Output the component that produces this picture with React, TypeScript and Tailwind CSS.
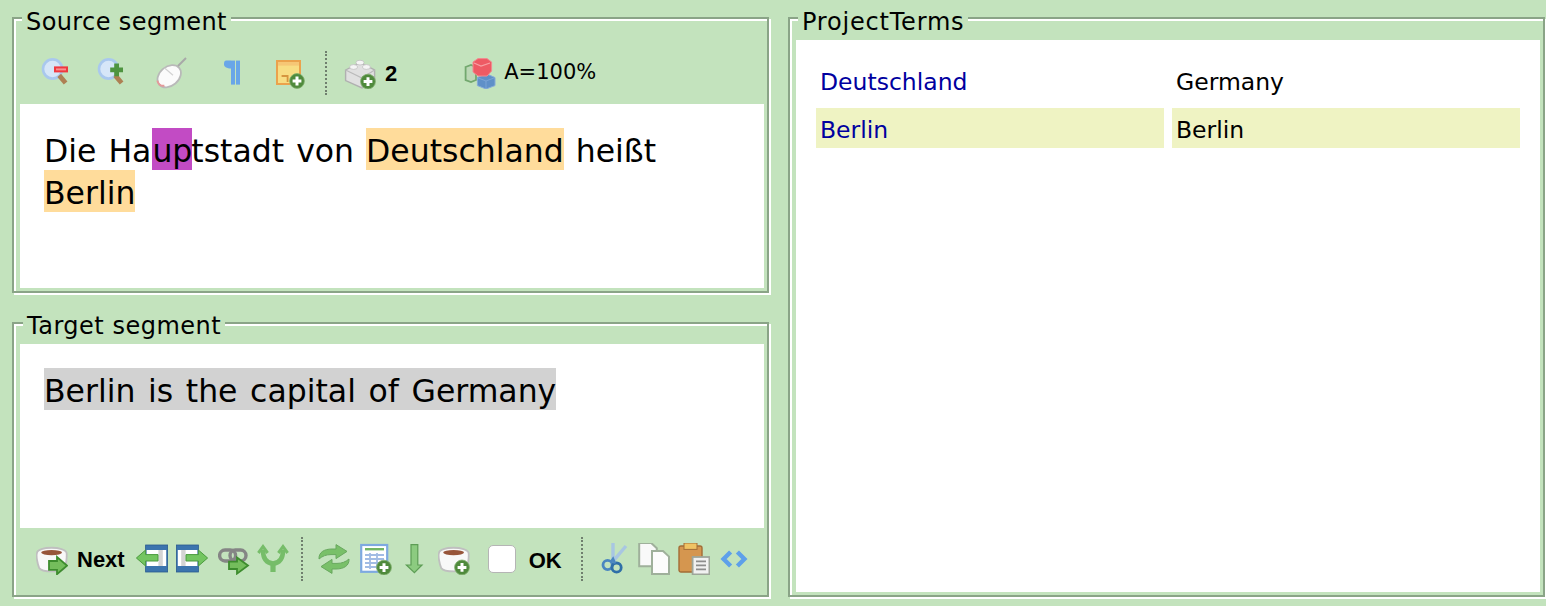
import React from "react";

const Plus = ({ x = 10, y = 10 }: { x?: number; y?: number }) => (
  <g>
    <circle cx={x} cy={y} r="3.7" fill="#4f8a3c" stroke="#7fae6c" strokeWidth=".4" />
    <path d={`M${x - 2.2} ${y}h4.4M${x} ${y - 2.2}v4.4`} stroke="#ffffff" strokeWidth="1.5" />
  </g>
);

const I = ({ children }: { children: React.ReactNode }) => (
  <svg width={32} height={32} viewBox="0 0 16 16" className="shrink-0">
    {children}
  </svg>
);

const Lens = ({ plus }: { plus?: boolean }) => (
  <I>
    <circle cx="6.3" cy="6" r="4.8" fill="#d6e6f8" stroke="#a9c8ee" strokeWidth="1.3" />
    <path d="M9.6 9.200l3.200 3.800" stroke="#ae8053" strokeWidth="2.400" />
    {plus ? (
      <path d="M10.300 3.200v6.400M7.100 6.400h6.400" stroke="#4e9440" strokeWidth="2.400" />
    ) : (
      <>
        <rect x="7" y="4.700" width="7" height="3" fill="#f0383f" />
        <rect x="8" y="5.700" width="5" height="1" fill="#f78f90" />
      </>
    )}
  </I>
);

const Mouse = () => (
  <I>
    <ellipse cx="6.600" cy="9.600" rx="6.500" ry="4.800" transform="rotate(-40 6.600 9.600)" fill="#fbfbfb" stroke="#b9b9b9" strokeWidth=".9" />
    <path d="M.7 11.800c.4 1.800 1.700 2.800 3.500 2.600" stroke="#e59a9a" strokeWidth="1" fill="none" />
    <path d="M4.300 5.500l4.200 3.600" stroke="#d2d2d2" strokeWidth=".6" />
    <path d="M11 4.500l4-4" stroke="#a8a8a8" strokeWidth="1" />
  </I>
);

const Pilcrow = () => (
  <I>
    <path d="M7.500 1.800H5.200C4.200 1.800 4 2.600 4 3.600c0 1.500 1.500 2 3.500 2.200z" fill="#69a6e8" />
    <rect x="7.500" y="1.800" width="2" height="12" fill="#69a6e8" />
    <rect x="10" y="1.800" width="2" height="12" fill="#69a6e8" />
  </I>
);

const Note = () => (
  <I>
    <rect x="1.500" y="2" width="11.500" height="11.500" fill="#f8dd83" stroke="#eba24c" />
    <rect x="2" y="2.500" width="10.500" height="1.800" fill="#f6c675" />
    <path d="M3.800 9.500h3v3" stroke="#d6963f" fill="none" strokeWidth=".9" />
    <Plus x={11.500} y={12} />
  </I>
);

const Brick = () => (
  <I>
    <path d="M.8 6.500L8 2.800l7.300 3.700v5.500L9 15.500.8 11.800z" fill="#e0e0e0" stroke="#b0b0b0" strokeWidth=".7" />
    <path d="M.8 6.500l8.200 4 6.300-4M9 10.500v5" stroke="#bababa" strokeWidth=".6" fill="none" />
    <ellipse cx="8" cy="2.800" rx="2" ry="1.200" fill="#f5f5f5" stroke="#c0c0c0" strokeWidth=".4" />
    <ellipse cx="4.800" cy="5" rx="2" ry="1.200" fill="#f5f5f5" stroke="#c0c0c0" strokeWidth=".4" />
    <ellipse cx="11.200" cy="5" rx="2" ry="1.200" fill="#f5f5f5" stroke="#c0c0c0" strokeWidth=".4" />
    <Plus x={12} y={12.300} />
  </I>
);

const Cubes = () => (
  <I>
    <path d="M.8 5l2.700-1L6 5v6.500l-2.500 1-2.700-1z" fill="#bcd8b6" stroke="#72a86e" strokeWidth=".9" />
    <path d="M6.700 10.300l4.300-2 4.500 2v4L11 16l-4.300-1.700z" fill="#5f90c8" stroke="#86abd8" strokeWidth=".5" />
    <path d="M6.700 10.300L11 12l4.500-1.700M11 12v4" stroke="#80a8d8" strokeWidth=".4" fill="none" />
    <path d="M4.500 2.500L7 .8h4.500l2.300 1.700v4.500L11.500 9.500H7L4.500 7.500z" fill="#ee5a64" stroke="#f18a90" strokeWidth=".5" />
    <path d="M5 3l3.500 1.500L13 3" stroke="#f7a0a4" strokeWidth=".6" fill="none" />
  </I>
);

const Cup = ({ add }: { add?: boolean }) => (
  <I>
    <path d="M.5 5c0-3.500 14.300-3.500 14.800 0 .2 1.800-.2 6-1 7.500-1.300 2.300-11.300 2.300-12.700 0C.9 11-.1 6.500.5 5z" fill="#f8f8f8" stroke="#bfbfbf" strokeWidth=".9" />
    <ellipse cx="7.800" cy="4.800" rx="5.200" ry="1.300" fill="#97553a" />
    {add ? (
      <Plus x={12} y={12.200} />
    ) : (
      <path d="M6.500 9H10.500V7l5 4.300-5 4.300v-2.200h-4z" fill="#74bd5c" stroke="#3d8c2e" strokeWidth=".9" />
    )}
  </I>
);

const BookArrow = ({ right }: { right?: boolean }) => (
  <I>
    <g transform={right ? "" : "matrix(-1 0 0 1 16 0)"}>
      <rect x=".2" y="1" width="11" height="13.500" fill="#3b74ae" stroke="#2a5b90" strokeWidth=".4" />
      <rect x=".9" y="3.500" width="9.800" height="8" fill="#ffffff" />
      <rect x="2.600" y="3.500" width="2.200" height="8" fill="#d4d4d4" />
      <path d="M5 5.800h6.200V3.500l4.600 4-4.600 4V9H5z" fill="#73c560" stroke="#4b9a3e" strokeWidth=".5" />
    </g>
  </I>
);

const Chain = () => (
  <I>
    <rect x=".8" y="3.500" width="8" height="5.500" rx="2.700" fill="none" stroke="#858585" strokeWidth="1.700" />
    <rect x="6" y="3.500" width="8" height="5.500" rx="2.700" fill="none" stroke="#858585" strokeWidth="1.700" />
    <path d="M5.500 9.300h4V7.200L15 11.200 9.500 15.300V13h-4z" fill="#74bd5c" stroke="#3d8c2e" strokeWidth=".9" />
  </I>
);

const Fork = () => (
  <I>
    <g fill="none" stroke="#76bd69" strokeLinecap="butt">
      <path d="M8 14.500V9.800" strokeWidth="2.600" />
      <path d="M8 10.300C4.300 10 3 7.500 3 3.500M8 10.300c3.700-.3 5-2.800 5-6.800" strokeWidth="2.300" />
      <path d="M.7 5L3 1.800 5.300 5M10.700 5L13 1.800 15.300 5" strokeWidth="1.500" />
    </g>
  </I>
);

const Sync = () => (
  <I>
    <path d="M.5 8c-.2-3.300 2.500-5 6.500-5h2V.8l5.500 3.400L9 7.800V5.800H6.500C4 5.800 2.300 6.500.5 8z" fill="#79c069" stroke="#68a85e" strokeWidth=".5" />
    <path d="M15.500 8c.2 3.300-2.500 5-6.500 5H7v2.200L1.500 11.800 7 8.200v2h2.500c2.500 0 4.200-.7 6-2.200z" fill="#79c069" stroke="#68a85e" strokeWidth=".5" />
  </I>
);

const Table = () => (
  <I>
    <rect x=".6" y="1" width="13" height="13.400" fill="#ffffff" stroke="#7ea9e0" strokeWidth="1.100" />
    <rect x="2.500" y="2.500" width="9.500" height="1.200" fill="#72b563" />
    <path d="M2.500 6h9.500M2.500 8h9.500M2.500 10h9.500M2.500 12h7M5 5v8M8.500 5v8" stroke="#a2bce4" strokeWidth=".9" />
    <Plus x={12} y={12.300} />
  </I>
);

const Down = () => (
  <I>
    <path d="M6.500.8h3.400v10.200H12L8.200 14.800 4.200 11h2.300z" fill="#8ccb80" stroke="#5d9d55" strokeWidth=".6" />
  </I>
);

const Scissors = () => (
  <I>
    <path d="M7.500 8.800L7.500-.5M7.800 8.800L14 1.500" stroke="#a8c6e2" strokeWidth="1.700" />
    <circle cx="4.800" cy="11" r="2.300" fill="none" stroke="#4a86c0" strokeWidth="1.400" />
    <circle cx="9.300" cy="12.300" r="2.300" fill="none" stroke="#2f6fa8" strokeWidth="1.400" />
    <path d="M6.500 9.500l1-1.500 1 2.300" stroke="#4a86c0" strokeWidth="1.300" fill="none" />
  </I>
);

const Copy = () => (
  <I>
    <path d="M.6 0h6l2.800 2.600v9H.6z" fill="#f9f9f9" stroke="#9fb09b" strokeWidth="1" />
    <path d="M7 4h5.500l3 2.800v8.700H7z" fill="#fcfcfc" stroke="#9fb09b" strokeWidth="1" />
  </I>
);

const Paste = () => (
  <I>
    <rect x=".5" y="1.500" width="11.500" height="13" rx="1" fill="#d5964f" stroke="#a36c36" strokeWidth=".7" />
    <rect x="3" y="0" width="6.500" height="3.200" fill="#efc363" stroke="#a36c36" strokeWidth=".5" />
    <rect x="7.300" y="7" width="8.400" height="8.700" fill="#f1f1f1" stroke="#9ea69a" strokeWidth=".9" />
    <path d="M9 9.200h5M9 11.200h5M9 13.200h5" stroke="#8d8d8d" strokeWidth=".9" />
  </I>
);

const Tag = () => (
  <I>
    <path d="M6.300 4.500L2.800 8l3.500 3.500M9.700 4.500L13.200 8l-3.500 3.500" fill="none" stroke="#5ea0ea" strokeWidth="2.200" />
  </I>
);

const Sep = ({ className }: { className: string }) => (
  <div className={`h-[44px] shrink-0 border-l-2 border-dotted border-[#6f7f6e] ${className}`} />
);

const Panel = ({
  title,
  titleClass,
  className,
  children,
}: {
  title: string;
  titleClass: string;
  className: string;
  children: React.ReactNode;
}) => (
  <section
    className={`relative flex flex-col border-2 border-[#8aa487] pb-[3px] pl-[6px] pr-[3px] shadow-[inset_2px_2px_0_#ffffff,2px_2px_0_#ffffff] ${className}`}
  >
    <h2 className={`absolute left-[8px] top-[-11px] bg-[#c3e3bd] px-1 text-[24px] leading-[28px] font-normal text-black ${titleClass}`}>
      {title}
    </h2>
    {children}
  </section>
);

const editor = "flex-1 bg-white px-[24px] pt-[24px] text-[31.5px] leading-[38px]";
const hl = "inline-block pt-[4px] leading-[38px]";
const bold = "font-['Liberation_Sans'] text-[22px] font-bold";

export default function App() {
  return (
    <div
      className="flex h-[606px] w-[1546px] gap-[19px] overflow-hidden bg-[#c3e3bd] pl-[12px] pt-[17px] text-black"
      style={{ fontFamily: '"DejaVu Sans", sans-serif' }}
    >
      <div className="flex w-[757px] flex-col gap-[29px]">
        <Panel title="Source segment" titleClass="tracking-[0.4px]" className="h-[276px]">
          <div className="flex h-[85px] shrink-0 items-center pl-[20px] pt-[23px]">
            <Lens />
            <div className="ml-[24px]"><Lens plus /></div>
            <div className="ml-[28px]"><Mouse /></div>
            <div className="ml-[28px]"><Pilcrow /></div>
            <div className="ml-[26px]"><Note /></div>
            <Sep className="ml-[19px] mb-[1px]" />
            <div className="ml-[17px]"><Brick /></div>
            <span className={`ml-[9px] ${bold}`}>2</span>
            <div className="ml-[67px]"><Cubes /></div>
            <span className="ml-[8px] text-[21px]">A=100%</span>
          </div>
          <div className={`${editor} [word-spacing:2px]`}>
            Die Ha<span className={`${hl} ml-[1px] mr-[-1px] bg-[#c24bc4]`}>up</span>tstadt von{" "}
            <span className={`${hl} bg-[#ffdc9b]`}>Deutschland</span> heißt{" "}
            <span className={`${hl} bg-[#ffdc9b]`}>Berlin</span>
          </div>
        </Panel>
        <Panel title="Target segment" titleClass="ml-[1px] mt-[-1px] tracking-[0.5px]" className="h-[275px] pt-[20px]">
          <div className={`${editor} [word-spacing:2.6px]`}>
            <span className={`${hl} bg-[#d2d2d2]`}>Berlin is the capital of Germany</span>
          </div>
          <div className="flex h-[64px] shrink-0 items-center pb-[2px] pl-[16px]">
            <Cup />
            <span className={`ml-[9px] ${bold}`}>Next</span>
            <div className="ml-[11px]"><BookArrow /></div>
            <div className="ml-[8px]"><BookArrow right /></div>
            <div className="ml-[10px]"><Chain /></div>
            <div className="ml-[7px]"><Fork /></div>
            <Sep className="ml-[12px]" />
            <div className="ml-[15px]"><Sync /></div>
            <div className="ml-[10px]"><Table /></div>
            <div className="ml-[6px]"><Down /></div>
            <div className="ml-[8px]"><Cup add /></div>
            <div className="ml-[18px] h-[28px] w-[28px] shrink-0 rounded-[5px] border border-[#b5b5b5] bg-white" />
            <span className={`ml-[13px] mt-[2px] ${bold}`}>OK</span>
            <Sep className="ml-[19px]" />
            <div className="ml-[15px]"><Scissors /></div>
            <div className="ml-[8px]"><Copy /></div>
            <div className="ml-[8px]"><Paste /></div>
            <div className="ml-[8px]"><Tag /></div>
          </div>
        </Panel>
      </div>
      <Panel title="ProjectTerms" titleClass="tracking-[0.8px]" className="h-[580px] w-[757px] pt-[21px]">
        <div className="flex-1 bg-white px-[20px] pt-[20px] text-[23.5px]">
          <div className="grid grid-cols-2 gap-[8px]">
            <div className="flex h-[40px] items-center pl-[4px] pt-[5px] text-[#0000a0]">Deutschland</div>
            <div className="flex h-[40px] items-center pl-[4px] pt-[5px]">Germany</div>
            <div className="flex h-[40px] items-center bg-[#eff3c3] pl-[4px] pt-[5px] text-[#0000a0]">Berlin</div>
            <div className="flex h-[40px] items-center bg-[#eff3c3] pl-[4px] pt-[5px]">Berlin</div>
          </div>
        </div>
      </Panel>
    </div>
  );
}
